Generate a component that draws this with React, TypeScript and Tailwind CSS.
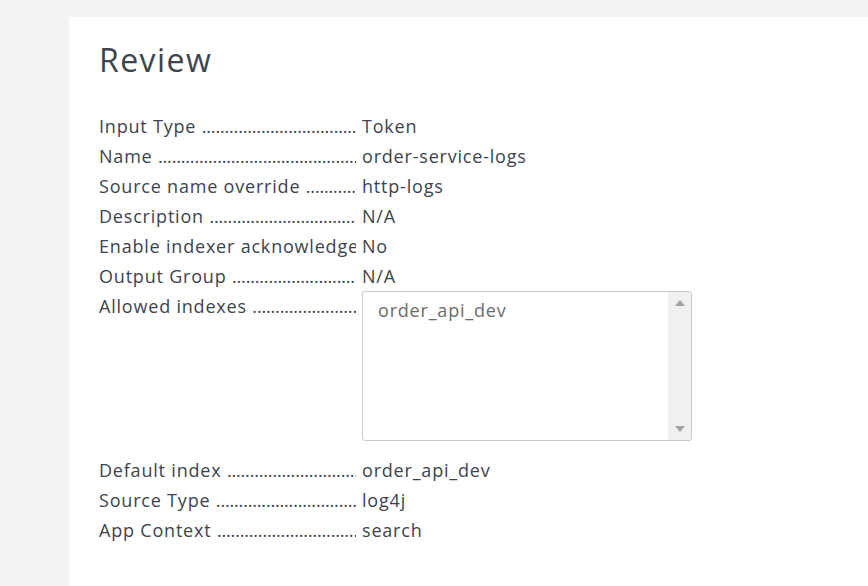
import React from "react";

const DOTS = ".".repeat(200);

const rowsA: [string, string][] = [
  ["Input Type", "Token"],
  ["Name", "order-service-logs"],
  ["Source name override", "http-logs"],
  ["Description", "N/A"],
  ["Enable indexer acknowledgement", "No"],
  ["Output Group", "N/A"],
];
const rowsB: [string, string][] = [
  ["Default index", "order_api_dev"],
  ["Source Type", "log4j"],
  ["App Context", "search"],
];

function Label({ text }: { text: string }) {
  return (
    <div className="w-[257px] shrink-0 overflow-hidden whitespace-nowrap">
      {text}{" "}
      <span className="tracking-[-0.01em]">{DOTS}</span>
    </div>
  );
}

function Row({ label, value }: { label: string; value: string }) {
  return (
    <div className="flex h-[30px] items-center gap-[6px]">
      <Label text={label} />
      <div className="whitespace-nowrap">{value}</div>
    </div>
  );
}

export default function App() {
  return (
    <div
      className="min-h-[586px] w-[868px] bg-[#f2f3f5] pl-[69px] pt-[17px] text-[#3c444d] tracking-[0.05em]"
      style={{ fontFamily: "'Open Sans', Lato, sans-serif" }}
    >
      <div className="min-h-[569px] bg-white pl-[30px] pt-[21px]">
        <h1 className="text-[32px] leading-[44px] font-normal tracking-[0.045em]">Review</h1>
        <div className="mt-[29px] text-[18px]">
          {rowsA.map(([l, v]) => (
            <Row key={l} label={l} value={v} />
          ))}
          <div className="flex items-start gap-[6px] pb-[14px]">
            <div className="flex h-[30px] items-center">
              <Label text="Allowed indexes" />
            </div>
            <div className="relative flex h-[150px] w-[330px] rounded-[3px] border border-[#c3cbd4] bg-white">
              <div className="flex-1 px-[15px] pt-[5px] text-[#6b6b6b]">order_api_dev</div>
              <div className="flex w-[23px] flex-col items-center justify-between rounded-r-[3px] bg-[#f0f0f0] py-[8px]">
                <svg width="10" height="6" viewBox="0 0 10 6">
                  <path d="M0 6 L5 0 L10 6 Z" fill="#a3a3a3" />
                </svg>
                <svg width="10" height="6" viewBox="0 0 10 6">
                  <path d="M0 0 L10 0 L5 6 Z" fill="#a3a3a3" />
                </svg>
              </div>
            </div>
          </div>
          {rowsB.map(([l, v]) => (
            <Row key={l} label={l} value={v} />
          ))}
        </div>
      </div>
    </div>
  );
}
